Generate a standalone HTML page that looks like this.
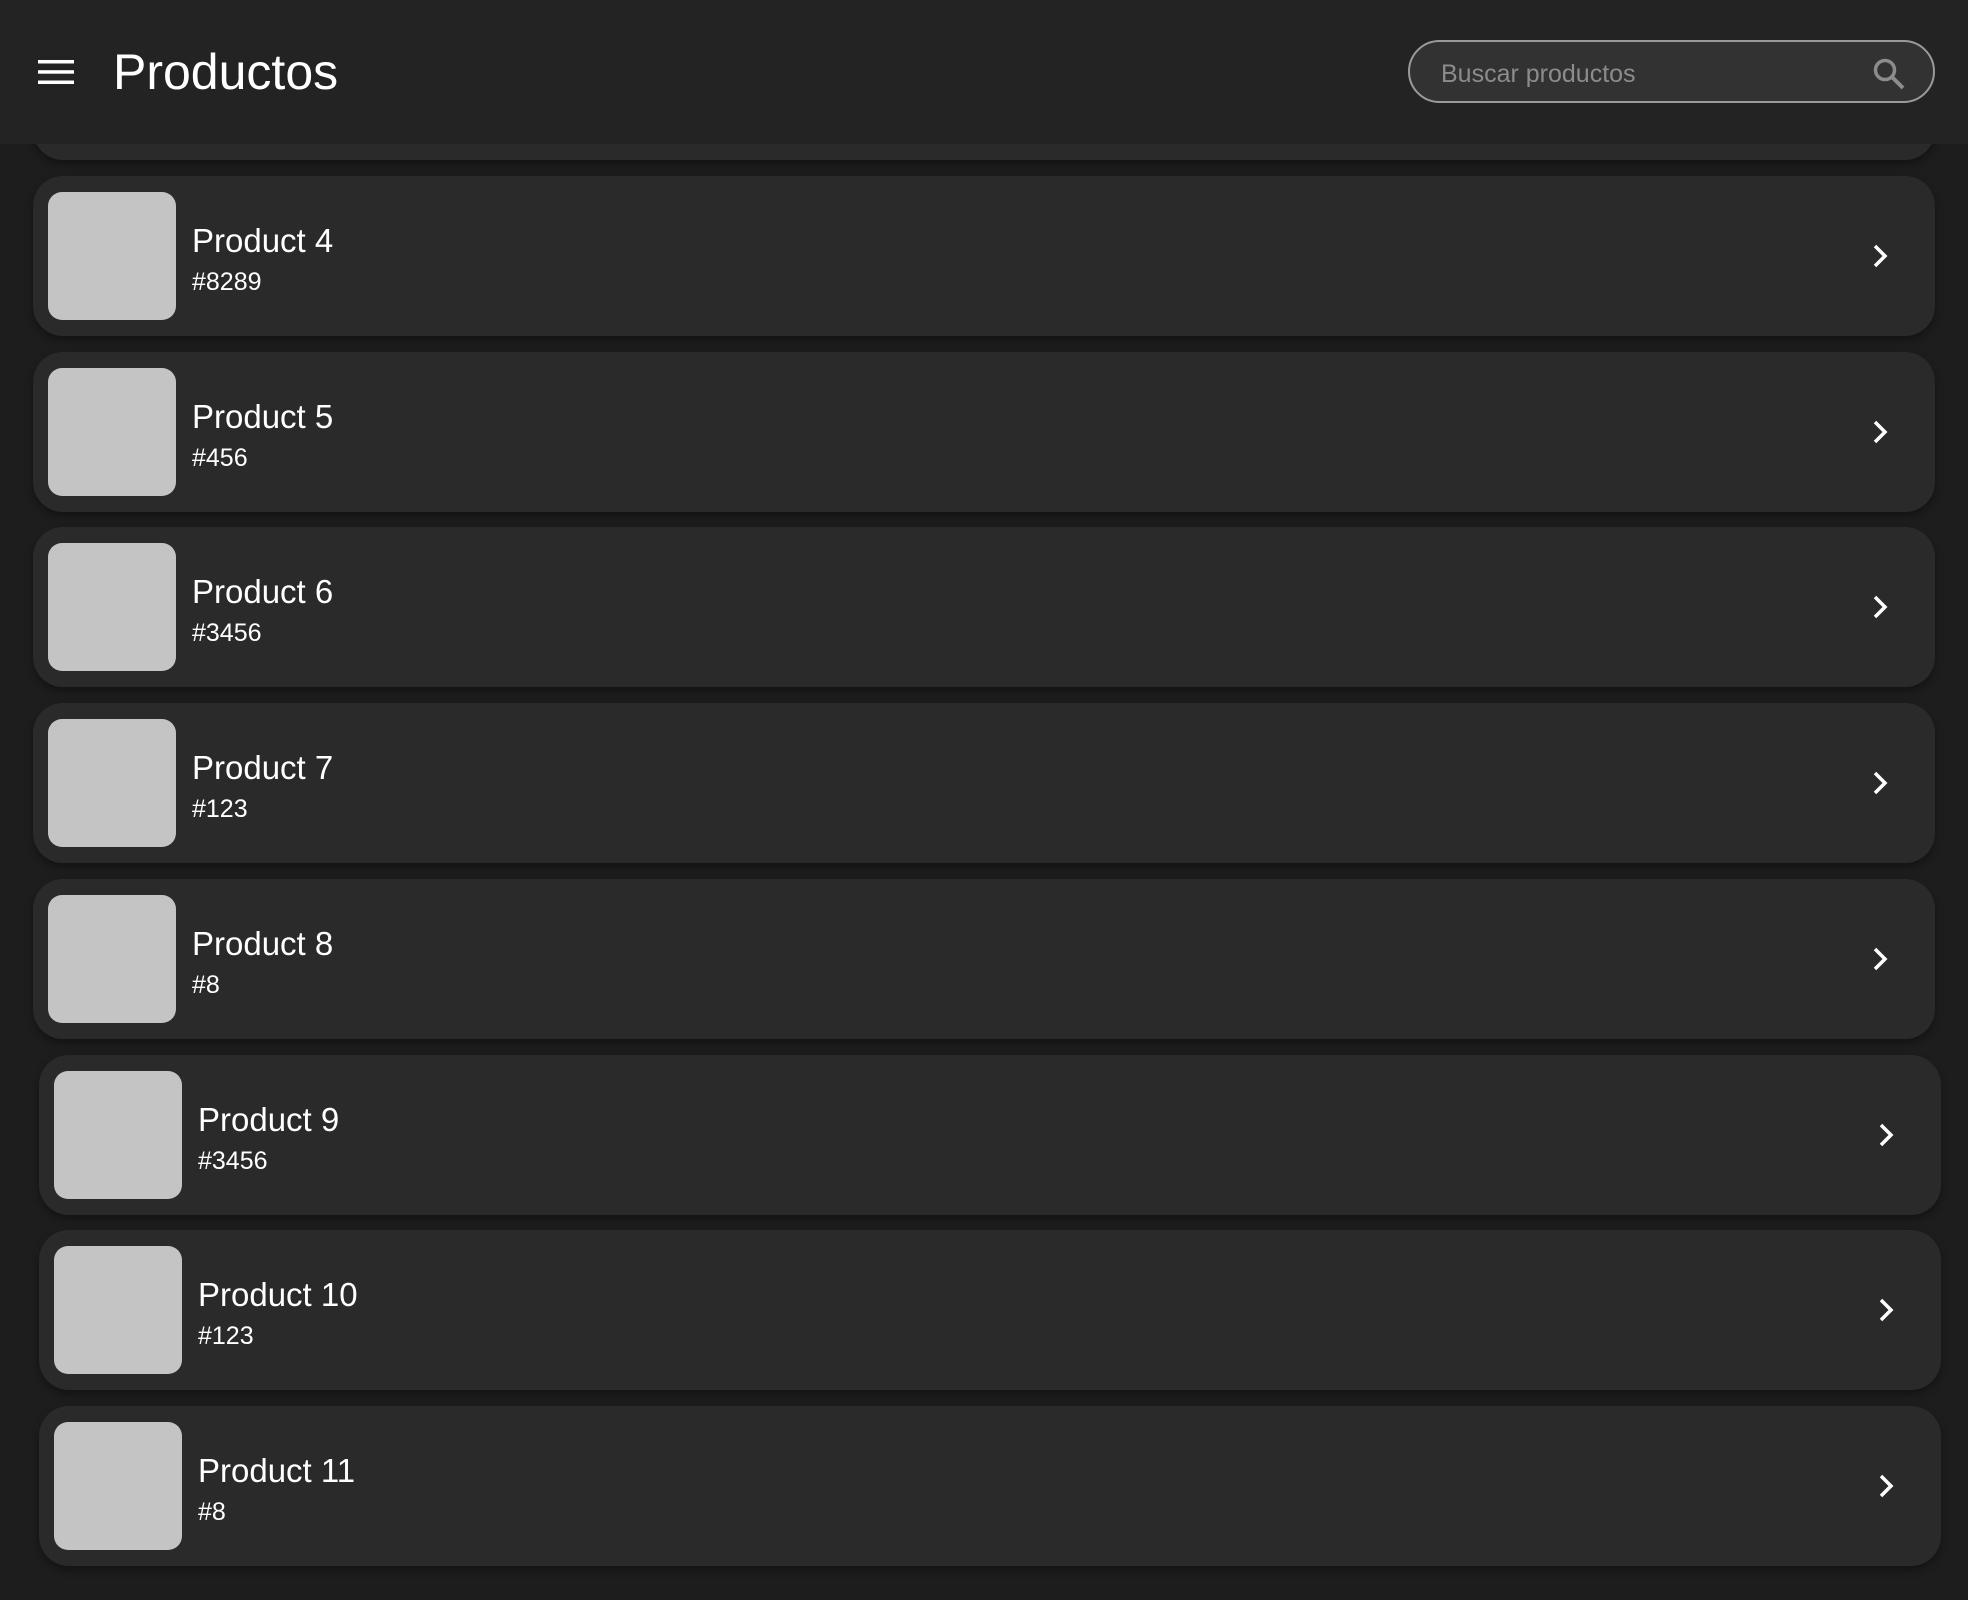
<!DOCTYPE html>
<html><head><meta charset="utf-8"><style>
*{margin:0;padding:0;box-sizing:border-box}
body{width:1968px;height:1600px;background:#1d1d1d;font-family:"Liberation Sans",sans-serif;position:relative;overflow:hidden;color:#fff}
.hdr{position:absolute;left:0;top:0;width:1968px;height:144px;background:#232323;z-index:2}
.card{position:absolute;height:160px;background:#2a2a2a;border-radius:30px;box-shadow:0 4px 8px rgba(0,0,0,.35)}
.th{position:absolute;left:15px;top:16px;width:128px;height:128px;background:#c4c4c4;border-radius:14px}
.t{position:absolute;left:159px;top:46px;font-size:33px;line-height:38px}
.s{position:absolute;left:159px;top:91px;font-size:25px;line-height:30px}
.ch{position:absolute;right:44px;top:67px}
</style></head><body>
<div class="hdr">
<svg style="position:absolute;left:38px;top:60px" width="36" height="24"><rect y="0" width="36" height="3.5" fill="#fff"/><rect y="10.2" width="36" height="3.5" fill="#fff"/><rect y="20.5" width="36" height="3.5" fill="#fff"/></svg>
<div style="position:absolute;left:113px;top:42px;font-size:50px;line-height:60px">Productos</div>
<div style="position:absolute;left:1408px;top:40px;width:527px;height:63px;border:2px solid #9a9a9a;border-radius:32px;background:#323232">
<div style="position:absolute;left:31px;top:17px;font-size:25px;line-height:30px;color:#8c8c8c">Buscar productos</div>
<svg style="position:absolute;left:462px;top:15px" width="34" height="34" viewBox="0 0 34 34"><circle cx="13" cy="13" r="9.5" fill="none" stroke="#8c8c8c" stroke-width="3.5"/><line x1="20" y1="20" x2="31" y2="31" stroke="#8c8c8c" stroke-width="4"/></svg>
</div>
</div>
<div class="card" style="left:33px;top:0;width:1902px"></div>
<div class="card" style="left:33px;top:176px;width:1902px"><div class="th"></div><div class="t">Product 4</div><div class="s">#8289</div><svg class="ch" width="20" height="26" viewBox="0 0 20 26"><path d="M4 3l10 10-10 10" fill="none" stroke="#fff" stroke-width="3.5"/></svg></div>
<div class="card" style="left:33px;top:352px;width:1902px"><div class="th"></div><div class="t">Product 5</div><div class="s">#456</div><svg class="ch" width="20" height="26" viewBox="0 0 20 26"><path d="M4 3l10 10-10 10" fill="none" stroke="#fff" stroke-width="3.5"/></svg></div>
<div class="card" style="left:33px;top:527px;width:1902px"><div class="th"></div><div class="t">Product 6</div><div class="s">#3456</div><svg class="ch" width="20" height="26" viewBox="0 0 20 26"><path d="M4 3l10 10-10 10" fill="none" stroke="#fff" stroke-width="3.5"/></svg></div>
<div class="card" style="left:33px;top:703px;width:1902px"><div class="th"></div><div class="t">Product 7</div><div class="s">#123</div><svg class="ch" width="20" height="26" viewBox="0 0 20 26"><path d="M4 3l10 10-10 10" fill="none" stroke="#fff" stroke-width="3.5"/></svg></div>
<div class="card" style="left:33px;top:879px;width:1902px"><div class="th"></div><div class="t">Product 8</div><div class="s">#8</div><svg class="ch" width="20" height="26" viewBox="0 0 20 26"><path d="M4 3l10 10-10 10" fill="none" stroke="#fff" stroke-width="3.5"/></svg></div>
<div class="card" style="left:39px;top:1055px;width:1902px"><div class="th"></div><div class="t">Product 9</div><div class="s">#3456</div><svg class="ch" width="20" height="26" viewBox="0 0 20 26"><path d="M4 3l10 10-10 10" fill="none" stroke="#fff" stroke-width="3.5"/></svg></div>
<div class="card" style="left:39px;top:1230px;width:1902px"><div class="th"></div><div class="t">Product 10</div><div class="s">#123</div><svg class="ch" width="20" height="26" viewBox="0 0 20 26"><path d="M4 3l10 10-10 10" fill="none" stroke="#fff" stroke-width="3.5"/></svg></div>
<div class="card" style="left:39px;top:1406px;width:1902px"><div class="th"></div><div class="t">Product 11</div><div class="s">#8</div><svg class="ch" width="20" height="26" viewBox="0 0 20 26"><path d="M4 3l10 10-10 10" fill="none" stroke="#fff" stroke-width="3.5"/></svg></div>
</body></html>
